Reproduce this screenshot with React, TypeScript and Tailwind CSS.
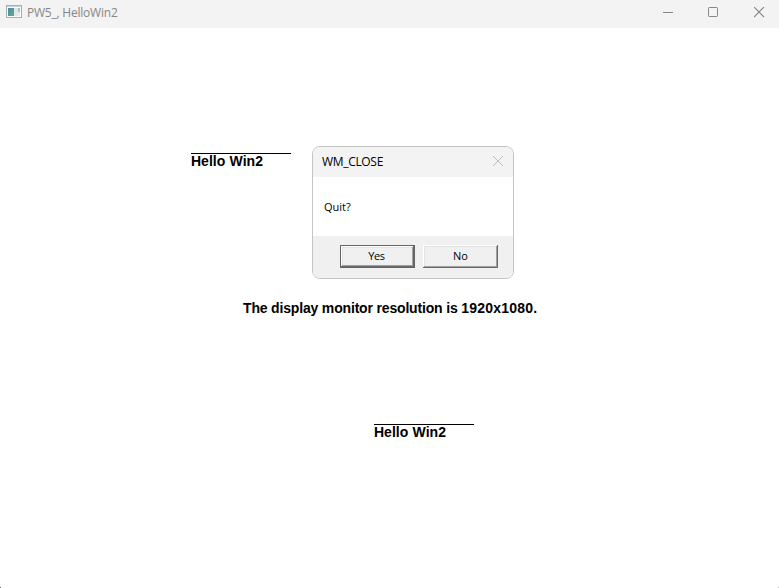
import React from "react";

function Greeting({ className }: { className: string }) {
  return (
    <div
      className={`absolute w-[100px] whitespace-nowrap border-t border-black font-['Liberation_Sans',sans-serif] text-[14px] leading-[14px] font-bold text-black [word-spacing:0.5px] ${className}`}
    >
      Hello Win2
    </div>
  );
}

function AppIcon() {
  return (
    <svg width="16" height="14" viewBox="0 0 16 14" shapeRendering="crispEdges">
      <defs>
        <linearGradient id="pane" x1="0" y1="0" x2="1" y2="1">
          <stop offset="0" stopColor="#5285ad" />
          <stop offset="1" stopColor="#5eae7c" />
        </linearGradient>
      </defs>
      <rect x="0.5" y="0.5" width="15" height="12" fill="#fafafa" stroke="#a9adb0" />
      <rect x="1" y="1" width="14" height="1" fill="#c7d2d8" />
      <rect x="2" y="3" width="6" height="8" fill="url(#pane)" />
      <rect x="8" y="3" width="4" height="8" fill="#e3e6e8" />
      <rect x="12" y="3" width="2" height="4" fill="#a3c5b7" />
      <rect x="12" y="7" width="2" height="4" fill="#e8ecec" />
    </svg>
  );
}

function TitleBar() {
  return (
    <header className="flex h-7 shrink-0 items-start bg-[#f3f3f3] pl-[6px]">
      <div className="mt-[5px]">
        <AppIcon />
      </div>
      <h1 className="mt-[5px] ml-[5px] font-['Open_Sans',sans-serif] text-[12px] leading-4 tracking-[-0.22px] whitespace-nowrap text-[#868686]">
        PW5_, HelloWin2
      </h1>
      <div className="mt-[7px] ml-auto flex pr-[14px]">
        <svg width="11" height="11" className="mr-[34px]" fill="none" stroke="#868686">
          <path d="M0 5.5h10" />
        </svg>
        <svg width="11" height="11" className="mr-[35px]" fill="none" stroke="#868686">
          <rect x="0.5" y="0.5" width="9" height="9" rx="0.8" />
        </svg>
        <svg width="11" height="11" fill="none" stroke="#868686" strokeWidth="1.15">
          <path d="M0 0l10 10M10 0l-10 10" />
        </svg>
      </div>
    </header>
  );
}

function Dialog() {
  return (
    <section className="absolute top-[118px] left-[312px] flex h-[133px] w-[202px] flex-col overflow-hidden rounded-[8px] border border-[#c4c4c4] bg-white font-['Open_Sans',sans-serif] text-black">
      <div className="flex h-[30px] shrink-0 items-start justify-between bg-[#f3f3f3] pr-[9px] pl-[9px]">
        <h2 className="mt-[7px] text-[12px] leading-4 tracking-[-0.32px]">WM_CLOSE</h2>
        <svg width="11" height="11" className="mt-[9px]" fill="none" stroke="#bdbdbd">
          <path d="M0 0l10 10M10 0l-10 10" />
        </svg>
      </div>
      <p className="h-[59px] shrink-0 pt-[22px] pl-[11px] text-[11px] leading-4">Quit?</p>
      <div className="flex grow gap-2 bg-[#f0f0f0] pt-[9px] pl-[27px] text-[11px]">
        <button className="flex h-[23px] w-[75px] justify-center border border-[#646464] bg-[#f0f0f0] pr-[2px] leading-[19px] tracking-[-0.4px] shadow-[inset_-1px_-1px_0_#696969,inset_1px_1px_0_#fff,inset_-2px_-2px_0_#a0a0a0,inset_2px_2px_0_#e3e3e3]">
          Yes
        </button>
        <button className="flex h-[23px] w-[75px] justify-center bg-[#f0f0f0] leading-[21px] shadow-[inset_-1px_-1px_0_#696969,inset_1px_1px_0_#fff,inset_-2px_-2px_0_#a0a0a0,inset_2px_2px_0_#e3e3e3]">
          No
        </button>
      </div>
    </section>
  );
}

export default function App() {
  return (
    <div className="flex h-[588px] w-[779px] flex-col overflow-hidden bg-white">
      <TitleBar />
      <main className="relative grow">
        <Greeting className="top-[125px] left-[191px]" />
        <Greeting className="top-[396px] left-[374px]" />
        <p className="absolute top-[272px] left-[243px] font-['Liberation_Sans',sans-serif] text-[14px] leading-4 font-bold tracking-[-0.17px] whitespace-nowrap text-black">
          The display monitor resolution is <span className="tracking-[0.2px]">1920x1080.</span>
        </p>
        <Dialog />
        <span className="absolute bottom-0 left-0 size-px bg-[#666666]" />
        <span className="absolute right-0 bottom-0 size-px bg-[#c4c4c4]" />
      </main>
    </div>
  );
}
